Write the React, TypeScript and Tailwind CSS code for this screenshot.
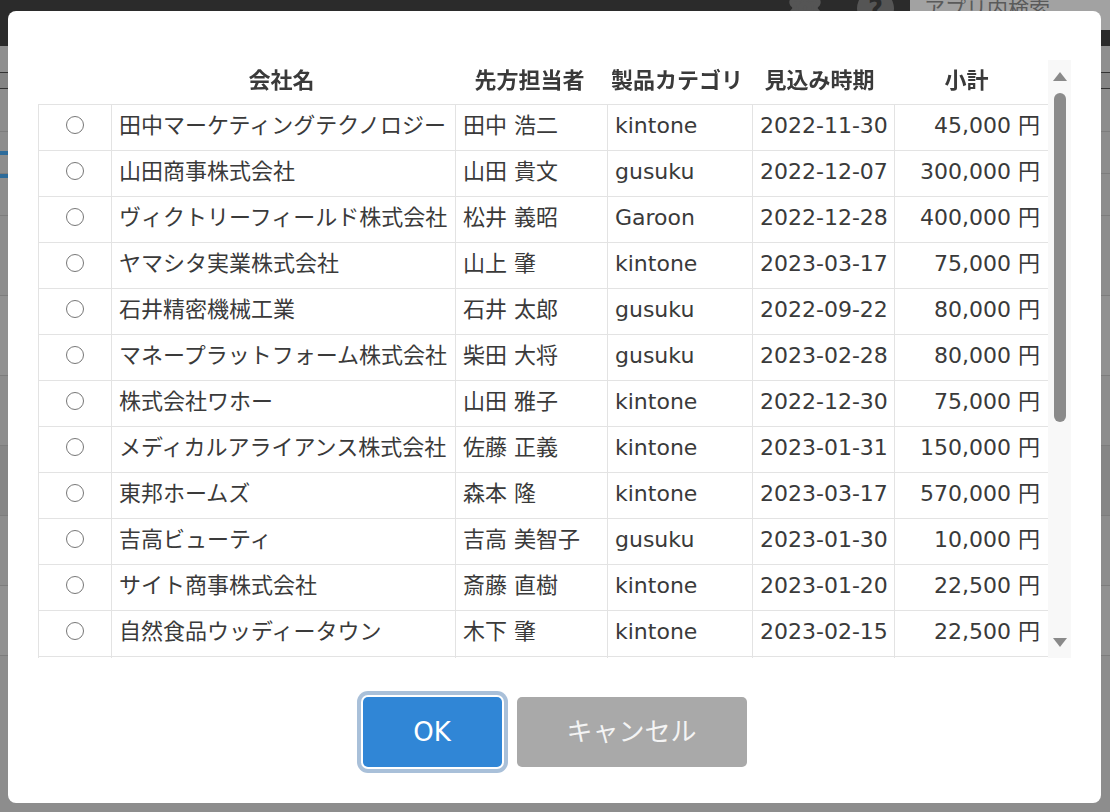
import { Settings } from 'lucide-react';

type Row = {
  company: string;
  person: string;
  product: string;
  date: string;
  subtotal: string;
};

const rows: Row[] = [
  { company: '田中マーケティングテクノロジー', person: '田中 浩二', product: 'kintone', date: '2022-11-30', subtotal: '45,000' },
  { company: '山田商事株式会社', person: '山田 貴文', product: 'gusuku', date: '2022-12-07', subtotal: '300,000' },
  { company: 'ヴィクトリーフィールド株式会社', person: '松井 義昭', product: 'Garoon', date: '2022-12-28', subtotal: '400,000' },
  { company: 'ヤマシタ実業株式会社', person: '山上 肇', product: 'kintone', date: '2023-03-17', subtotal: '75,000' },
  { company: '石井精密機械工業', person: '石井 太郎', product: 'gusuku', date: '2022-09-22', subtotal: '80,000' },
  { company: 'マネープラットフォーム株式会社', person: '柴田 大将', product: 'gusuku', date: '2023-02-28', subtotal: '80,000' },
  { company: '株式会社ワホー', person: '山田 雅子', product: 'kintone', date: '2022-12-30', subtotal: '75,000' },
  { company: 'メディカルアライアンス株式会社', person: '佐藤 正義', product: 'kintone', date: '2023-01-31', subtotal: '150,000' },
  { company: '東邦ホームズ', person: '森本 隆', product: 'kintone', date: '2023-03-17', subtotal: '570,000' },
  { company: '吉高ビューティ', person: '吉高 美智子', product: 'gusuku', date: '2023-01-30', subtotal: '10,000' },
  { company: 'サイト商事株式会社', person: '斎藤 直樹', product: 'kintone', date: '2023-01-20', subtotal: '22,500' },
  { company: '自然食品ウッディータウン', person: '木下 肇', product: 'kintone', date: '2023-02-15', subtotal: '22,500' },
  { company: '北斗システム株式会社', person: '北村 翔', product: 'Garoon', date: '2023-02-10', subtotal: '120,000' },
  { company: '青空建設株式会社', person: '青木 誠', product: 'kintone', date: '2023-03-03', subtotal: '60,000' },
  { company: '株式会社グリーンフーズ', person: '緑川 恵', product: 'gusuku', date: '2022-12-15', subtotal: '35,000' },
  { company: 'ミナト物流株式会社', person: '港 健一', product: 'kintone', date: '2023-01-12', subtotal: '90,000' },
  { company: '桜井デザイン事務所', person: '桜井 花子', product: 'kintone', date: '2023-02-22', subtotal: '15,000' },
  { company: '東洋エンジニアリング', person: '東 大輔', product: 'Garoon', date: '2023-03-08', subtotal: '250,000' },
  { company: '株式会社ハーモニー', person: '原 美穂', product: 'gusuku', date: '2022-11-18', subtotal: '48,000' },
  { company: '中央電機株式会社', person: '中野 修', product: 'kintone', date: '2023-01-25', subtotal: '110,000' },
];

function ScrollArrow({ down }: { down?: boolean }) {
  return (
    <div className="h-[32px] flex items-center justify-center">
      <svg width="14" height="9" viewBox="0 0 14 9">
        <polygon points={down ? '0,0 14,0 7,9' : '7,0 14,9 0,9'} fill="#8a8a8a" />
      </svg>
    </div>
  );
}

export default function App() {
  const cell = 'border border-[#e3e3e3] px-[7px] pb-[3px] align-middle whitespace-nowrap overflow-hidden';

  return (
    <div className="relative w-[1110px] h-[812px] overflow-hidden bg-[#8d8d8d] font-['DejaVu_Sans','Noto_Sans_CJK_JP',sans-serif] text-[#3a3a3a]">
      {/* page behind the dialog */}
      <header className="h-[46px] bg-[#2b2b2b] flex justify-end items-start">
        <div className="w-[36px] h-[36px] -mt-[10px] flex items-center justify-center text-[#555]">
          <Settings size={38} strokeWidth={3} fill="#555" />
        </div>
        <div className="ml-[34px] w-[37px] h-[37px] -mt-[10px] rounded-full bg-[#555] flex items-center justify-center text-[#2b2b2b] font-bold text-[26px] leading-none">
          ?
        </div>
        <div className="ml-[16px] w-[200px] h-[30px] bg-[#a2a2a2] pl-[14px] text-[21px] leading-[20px] text-[#5a5a5a] overflow-hidden">
          <div className="-mt-[1px]">アプリ内検索</div>
        </div>
      </header>
      <div className="h-[26px] bg-[#8f8f8f]" />
      <div className="h-[17px] bg-[#848484] border-y border-[#333]" />
      <div className="h-[43px] border-b border-[#7d7d7d]" />
      <div className="h-[42px] border-b border-[#7d7d7d] flex items-center">
        <div className="w-[8px] h-[4px] bg-[#2d6b9a]" />
      </div>
      <div className="h-[42px] border-b border-[#7d7d7d] flex items-start">
        <div className="w-[8px] h-[4px] bg-[#2d6b9a]" />
      </div>
      <div className="h-[80px] border-b border-[#7d7d7d]" />
      <div className="h-[80px] border-b border-[#7d7d7d] bg-[#919191]" />
      <div className="h-[70px] border-b border-[#7d7d7d]" />
      <div className="h-[70px] border-b border-[#7d7d7d] bg-[#868686]" />
      <div className="h-[70px] border-b border-[#7d7d7d]" />
      <div className="h-[70px] border-b border-[#7d7d7d] bg-[#919191]" />
      <div className="h-[70px] flex">
        <div className="w-[53px] border-r border-[#7a7a7a]" />
        <div className="w-[384px] border-r border-[#7a7a7a]" />
      </div>

      {/* dialog */}
      <div className="absolute left-[8px] top-[11px] w-[1093px] h-[792px] bg-white rounded-[8px] pl-[30px] pt-[49px]">
        <div className="flex h-[598px]">
          <div className="w-[1010px] overflow-y-auto [scrollbar-width:none]">
            <table className="w-[1010px] table-fixed border-collapse text-[22px] leading-[28px]">
              <colgroup>
                <col className="w-[73px]" />
                <col className="w-[344px]" />
                <col className="w-[152px]" />
                <col className="w-[145px]" />
                <col className="w-[142px]" />
                <col className="w-[154px]" />
              </colgroup>
              <thead className="sticky top-0 bg-white">
                <tr className="h-[44px] text-[#3a3a3a]">
                  <th />
                  <th className="font-bold text-center pb-[1px] pr-[4px]">会社名</th>
                  <th className="font-bold text-center pb-[1px] pr-[4px]">先方担当者</th>
                  <th className="font-bold text-center pb-[1px] pr-[6px]">製品カテゴリ</th>
                  <th className="font-bold text-center pb-[1px] pr-[8px]">見込み時期</th>
                  <th className="font-bold text-center pb-[1px] pr-[10px]">小計</th>
                </tr>
              </thead>
              <tbody>
                {rows.map((r) => (
                  <tr key={r.company} className="h-[46px]">
                    <td className={`${cell} text-center`}>
                      <span className="inline-block w-[18px] h-[18px] rounded-full border-[1.5px] border-[#777] bg-white align-middle -mt-[4px]" />
                    </td>
                    <td className={cell}>{r.company}</td>
                    <td className={cell}>{r.person}</td>
                    <td className={cell}>{r.product}</td>
                    <td className={cell}>{r.date}</td>
                    <td className={`${cell} text-right pr-[8px]`}>{r.subtotal} 円</td>
                  </tr>
                ))}
              </tbody>
            </table>
          </div>
          <div className="w-[23px] bg-[#f8f8f8] flex flex-col">
            <ScrollArrow />
            <div className="flex-1 flex justify-center pt-[1px] pl-[1px]">
              <div className="w-[12px] h-[329px] rounded-full bg-[#8b8b8b]" />
            </div>
            <ScrollArrow down />
          </div>
        </div>

        <div className="mt-[39px] pr-[30px] flex justify-center gap-[15px] text-[26px]">
          <button className="w-[139px] h-[70px] rounded-[5px] bg-[#3086d6] text-white shadow-[0_0_0_2px_#fff,0_0_0_6px_#a9c0d9]">
            OK
          </button>
          <button className="w-[230px] h-[70px] rounded-[5px] bg-[#a9a9a9] text-[#f4f4f4]">
            キャンセル
          </button>
        </div>
      </div>
    </div>
  );
}
